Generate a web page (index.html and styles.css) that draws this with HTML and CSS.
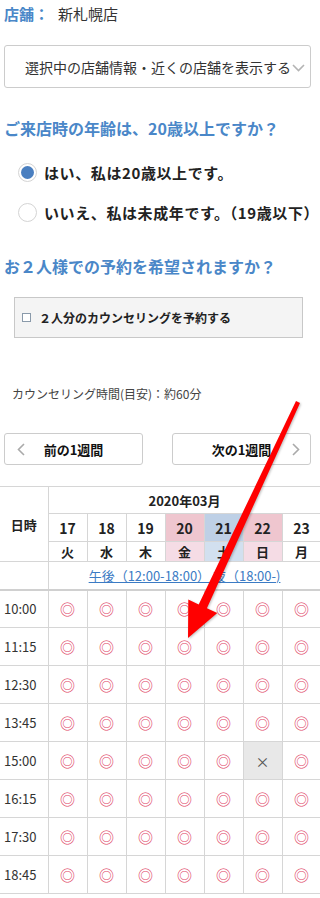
FILE: index.html
```html
<!DOCTYPE html>
<html lang="ja">
<head>
  <title>カウンセリング予約</title>
  <meta charset="utf-8">
  <meta name="viewport" content="width=device-width, initial-scale=1">
  <link rel="stylesheet" href="styles.css">
</head>
<body>
  <div class="page">
    <p class="shop"><span class="shop-label">店舗：</span>新札幌店</p>

    <!-- 店舗の切り替え -->
    <div class="shop-select">
      <span>選択中の店舗情報・近くの店舗を表示する</span>
      <svg class="shop-select-arrow" width="13" height="8" viewBox="0 0 13 8"><polyline points="1,1 6.5,6.5 12,1" fill="none" stroke="#b4b4b4" stroke-width="1.6"/></svg>
    </div>

    <h2 class="question">ご来店時の年齢は、20歳以上ですか？</h2>
    <ul class="radio-list">
      <li class="radio radio-checked"><span class="radio-mark"></span>はい、私は20歳以上です。</li>
      <li class="radio"><span class="radio-mark"></span>いいえ、私は未成年です。（19歳以下）</li>
    </ul>

    <h2 class="question question-pair">お２人様での予約を希望されますか？</h2>
    <label class="pair-box"><span class="pair-check"></span>２人分のカウンセリングを予約する</label>

    <p class="duration">カウンセリング時間(目安)：約60分</p>

    <div class="week-nav">
      <button class="week-button" type="button">
        <svg class="week-arrow week-arrow-prev" width="8" height="13" viewBox="0 0 8 13"><polyline points="7,1 1.5,6.5 7,12" fill="none" stroke="#aaaaaa" stroke-width="1.6"/></svg>
        前の1週間
      </button>
      <button class="week-button" type="button">
        次の1週間
        <svg class="week-arrow week-arrow-next" width="8" height="13" viewBox="0 0 8 13"><polyline points="1,1 6.5,6.5 1,12" fill="none" stroke="#aaaaaa" stroke-width="1.6"/></svg>
      </button>
    </div>
  </div>

  <table class="calendar">
    <colgroup>
      <col class="col-time">
      <col class="col-day"><col class="col-day"><col class="col-day"><col class="col-day"><col class="col-day"><col class="col-day"><col class="col-day">
    </colgroup>
    <thead>
      <tr class="row-month">
        <th class="cell-head" rowspan="3">日時</th>
        <th colspan="7">2020年03月</th>
      </tr>
      <tr class="row-date">
        <th>17</th><th>18</th><th>19</th>
        <th class="holiday">20</th><th class="saturday">21</th><th class="holiday">22</th>
        <th>23</th>
      </tr>
      <tr class="row-week">
        <th>火</th><th>水</th><th>木</th>
        <th class="holiday-light">金</th><th class="saturday-light">土</th><th class="holiday-light">日</th>
        <th>月</th>
      </tr>
      <tr class="row-range">
        <td class="cell-first"></td>
        <td colspan="7"><a href="#">午後（12:00-18:00）</a> <a href="#">夜（18:00-)</a></td>
      </tr>
    </thead>
    <tbody>
      <tr><td class="cell-first">10:00</td><td>◎</td><td>◎</td><td>◎</td><td>◎</td><td>◎</td><td>◎</td><td>◎</td></tr>
      <tr><td class="cell-first">11:15</td><td>◎</td><td>◎</td><td>◎</td><td>◎</td><td>◎</td><td>◎</td><td>◎</td></tr>
      <tr><td class="cell-first">12:30</td><td>◎</td><td>◎</td><td>◎</td><td>◎</td><td>◎</td><td>◎</td><td>◎</td></tr>
      <tr><td class="cell-first">13:45</td><td>◎</td><td>◎</td><td>◎</td><td>◎</td><td>◎</td><td>◎</td><td>◎</td></tr>
      <tr><td class="cell-first">15:00</td><td>◎</td><td>◎</td><td>◎</td><td>◎</td><td>◎</td><td class="full">×</td><td>◎</td></tr>
      <tr><td class="cell-first">16:15</td><td>◎</td><td>◎</td><td>◎</td><td>◎</td><td>◎</td><td>◎</td><td>◎</td></tr>
      <tr><td class="cell-first">17:30</td><td>◎</td><td>◎</td><td>◎</td><td>◎</td><td>◎</td><td>◎</td><td>◎</td></tr>
      <tr><td class="cell-first">18:45</td><td>◎</td><td>◎</td><td>◎</td><td>◎</td><td>◎</td><td>◎</td><td>◎</td></tr>
    </tbody>
  </table>

  <!-- 注釈の赤い矢印 -->
  <svg class="annotation" width="320" height="898" viewBox="0 0 320 898">
    <polygon points="300,402.9 206.9,608.2 217.3,613.1 188,638 188.3,599.5 198.7,604.4 296,401.1" fill="#ff0000"/>
  </svg>
</body>
</html>
```

FILE: styles.css
```css
*, *::before, *::after {
  margin: 0;
  padding: 0;
  box-sizing: border-box;
}

html, body {
  overflow-x: hidden;
}

body {
  position: relative;
  width: 320px;
  background-color: #ffffff;
  color: #222222;
  font-family: "Noto Sans CJK JP", "Noto Sans", sans-serif;
  font-size: 13px;
}

.page {
  width: 311px;
  padding-left: 4px;
  padding-top: 4px;
}

.shop {
  font-size: 15px;
  line-height: 20px;
  color: #333333;
}

.shop-label {
  margin-right: 9px;
  color: #4a87c8;
  font-weight: 700;
}

.shop-select {
  display: flex;
  align-items: center;
  height: 43px;
  margin-top: 21px;
  padding-left: 20px;
  border: 1px solid #cccccc;
  border-radius: 3px;
  font-size: 14px;
  color: #333333;
  white-space: nowrap;
}

.shop-select-arrow {
  flex-shrink: 0;
  margin-left: 1px;
  margin-top: 2px;
}

.question {
  margin-top: 28px;
  font-size: 16px;
  font-weight: 700;
  line-height: 24px;
  color: #4a87c8;
  white-space: nowrap;
}

.question-pair {
  margin-top: 22px;
}

.radio-list {
  list-style: none;
  margin-top: 12px;
}

.radio {
  display: flex;
  align-items: center;
  height: 40px;
  padding-left: 14px;
  font-size: 15px;
  font-weight: 700;
  letter-spacing: 0.6px;
  white-space: nowrap;
}

.radio-mark {
  position: relative;
  flex-shrink: 0;
  width: 19px;
  height: 19px;
  margin-right: 7px;
  border: 1px solid #d4d4d4;
  border-radius: 50%;
  background-color: #ffffff;
}

.radio-checked .radio-mark::after {
  content: "";
  position: absolute;
  top: 2px;
  left: 2px;
  width: 13px;
  height: 13px;
  border-radius: 50%;
  background-color: #4a7fc0;
}

.pair-box {
  display: flex;
  align-items: center;
  width: 289px;
  height: 41px;
  margin-top: 19px;
  margin-left: 10px;
  padding-left: 7px;
  border: 1px solid #c8c8c8;
  background-color: #f4f4f4;
  font-size: 12px;
  font-weight: 700;
  white-space: nowrap;
}

.pair-check {
  width: 9px;
  height: 9px;
  margin-right: 8px;
  border: 1px solid #8a9aaa;
  background-color: #ffffff;
}

.duration {
  margin-top: 47px;
  padding-left: 8px;
  font-size: 12px;
  line-height: 18px;
  color: #444444;
}

.week-nav {
  display: flex;
  justify-content: space-between;
  margin-top: 30px;
}

.week-button {
  position: relative;
  width: 139px;
  height: 32px;
  border: 1px solid #cccccc;
  border-radius: 3px;
  background-color: #ffffff;
  color: #111111;
  font-family: inherit;
  font-size: 13px;
  font-weight: 700;
}

.week-arrow {
  position: absolute;
  top: 9px;
}

.week-arrow-prev {
  left: 12px;
}

.week-arrow-next {
  right: 10px;
}

.calendar {
  width: 321px;
  margin-top: 21px;
  border-collapse: collapse;
  table-layout: fixed;
  text-align: center;
}

.col-time {
  width: 48px;
}

.col-day {
  width: 39px;
}

.calendar th,
.calendar td {
  border: 1px solid #d6d6d6;
  padding: 0;
}

.calendar th {
  font-size: 13px;
  font-weight: 700;
  color: #222222;
}

.calendar .cell-head,
.calendar .cell-first {
  border-left: none;
}

.row-month th {
  height: 27px;
}

.row-date th {
  height: 28px;
  font-size: 14px;
}

.row-week th {
  height: 20px;
  line-height: 18px;
}

.row-range td {
  height: 28px;
  border-bottom: 2px solid #d0d0d0;
  font-size: 13px;
  white-space: nowrap;
}

.row-range a {
  color: #3b7bc4;
}

.holiday {
  background-color: #efc6cf;
}

.holiday-light {
  background-color: #f5dce5;
}

.saturday {
  background-color: #bed0e6;
}

.saturday-light {
  background-color: #d2e0ef;
}

.calendar tbody td {
  height: 38px;
  font-size: 15px;
  color: #e0415f;
}

.calendar tbody .cell-first {
  padding-left: 4px;
  text-align: left;
  font-size: 13px;
  color: #333333;
}

.calendar tbody .full {
  background-color: #e8e8e8;
  color: #555555;
  font-size: 14px;
}

.annotation {
  position: absolute;
  top: 0;
  left: 0;
  pointer-events: none;
  filter: drop-shadow(1px 1px 1px rgba(0, 0, 0, 0.25));
}
```
